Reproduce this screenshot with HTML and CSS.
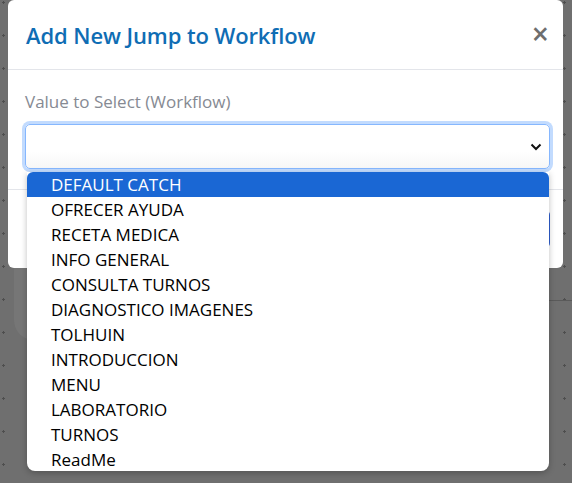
FILE: index.html
```html
<!DOCTYPE html>
<html>
<head>
<meta charset="utf-8">
<link rel="stylesheet" href="styles.css">
</head>
<body>
<div class="backdrop">
  <div class="under-card"></div>
  <div class="under-line"></div>
  <div class="modal">
    <div class="modal-header">
      <h2 class="modal-title">Add New Jump to Workflow</h2>
      <span class="close">&times;</span>
    </div>
    <div class="modal-body">
      <label class="label">Value to Select (Workflow)</label>
      <div class="select">
        <svg class="chev" width="12" height="8" viewBox="0 0 12 8"><path d="M1.5 1.5 L6 6 L10.5 1.5" fill="none" stroke="#111" stroke-width="2"/></svg>
      </div>
    </div>
    <div class="modal-footer">
      <div class="btn"></div>
    </div>
  </div>
  <ul class="dropdown">
    <li class="active">DEFAULT CATCH</li>
    <li>OFRECER AYUDA</li>
    <li>RECETA MEDICA</li>
    <li>INFO GENERAL</li>
    <li>CONSULTA TURNOS</li>
    <li>DIAGNOSTICO IMAGENES</li>
    <li>TOLHUIN</li>
    <li>INTRODUCCION</li>
    <li>MENU</li>
    <li>LABORATORIO</li>
    <li>TURNOS</li>
    <li>ReadMe</li>
  </ul>
</div>
</body>
</html>
```
FILE: styles.css
```css
html, body {
  margin: 0;
  padding: 0;
  width: 572px;
  height: 483px;
  overflow: hidden;
}
body {
  font-family: "Open Sans", "Noto Sans", sans-serif;
}
.backdrop {
  position: relative;
  width: 572px;
  height: 483px;
  background-color: #6f6f6f;
  background-image: radial-gradient(circle, #4e4e4e 1px, transparent 1.3px);
  background-size: 33px 33px;
  background-position: -13px -14px;
}
.under-card {
  position: absolute;
  left: 14px;
  top: 250px;
  width: 40px;
  height: 90px;
  border-radius: 20px;
  background: #767676;
}
.under-line {
  position: absolute;
  left: 540px;
  top: 300px;
  width: 32px;
  height: 1px;
  background: #5a5a5a;
}
.modal {
  position: absolute;
  left: 8px;
  top: 0;
  width: 555px;
  height: 268px;
  background: #fff;
  border-radius: 6px;
  box-sizing: border-box;
  display: flex;
  flex-direction: column;
}
.modal-header {
  height: 70px;
  box-sizing: border-box;
  border-bottom: 1px solid #e3e5ea;
  display: flex;
  align-items: center;
  justify-content: space-between;
  padding: 0 14px 0 18px;
}
.modal-title {
  margin: 0;
  font-size: 22px;
  font-weight: 600;
  color: #0f6db4;
  letter-spacing: -0.1px;
  margin-top: 1px;
}
.close {
  font-size: 30px;
  color: #6e6e6e;
  line-height: 1;
  font-weight: 600;
  margin-top: -2px;
}
.modal-body {
  padding: 19px 13px 0 17px;
  height: 120px;
  box-sizing: border-box;
  border-bottom: 1px solid #e3e5ea;
}
.label {
  display: block;
  font-size: 17px;
  color: #868a93;
  line-height: 26px;
}
.select {
  margin-top: 9px;
  height: 45px;
  box-sizing: border-box;
  border: 1px solid #86b7fe;
  border-radius: 5px;
  box-shadow: 0 0 0 3px #c2dbfe;
  background: linear-gradient(#fff 60%, #f7f7f7);
  display: flex;
  align-items: center;
  justify-content: flex-end;
  padding-right: 7px;
}
.modal-footer {
  flex: 1;
  display: flex;
  justify-content: flex-end;
  align-items: center;
  padding-right: 13px;
}
.btn {
  width: 80px;
  height: 38px;
  background: #2f5fd0;
  border-radius: 5px;
}
.dropdown {
  position: absolute;
  left: 27px;
  top: 172px;
  width: 522px;
  height: 299px;
  margin: 0;
  padding: 0;
  list-style: none;
  background: #fff;
  border-radius: 0 0 8px 8px;
  box-shadow: 0 2px 6px rgba(0,0,0,0.25);
  overflow: hidden;
  font-family: "Open Sans", "Noto Sans", sans-serif;
}
.dropdown li {
  height: 25px;
  line-height: 25px;
  padding-left: 24px;
  font-size: 17px;
  color: #000;
}
.dropdown li.active {
  background: #1a67d4;
  color: #fff;
  border-radius: 6px 6px 0 0;
}
```
